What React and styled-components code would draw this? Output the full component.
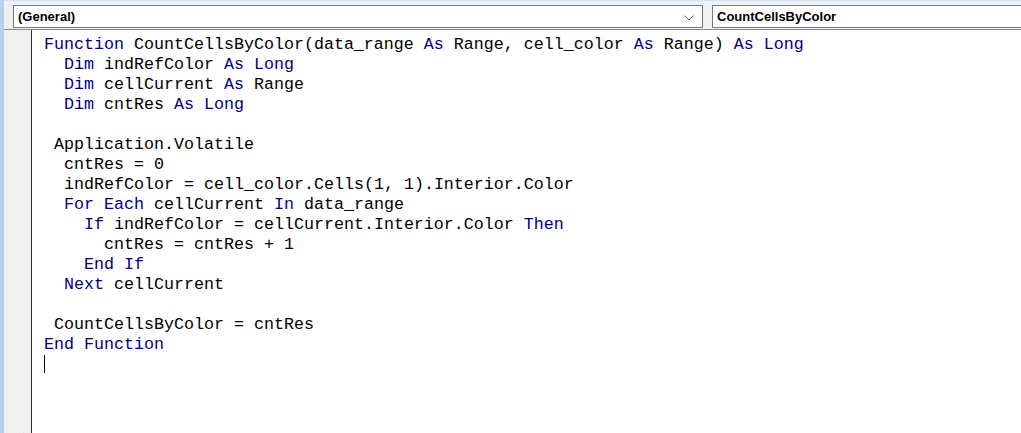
import React from "react";
import styled, { createGlobalStyle } from "styled-components";

const Global = createGlobalStyle`
  html, body { margin: 0; padding: 0; background: #ffffff; overflow: hidden; }
  #root { width: 1021px; height: 433px; }
`;

const Window = styled.div`
  display: flex;
  width: 1021px;
  height: 433px;
  overflow: hidden;
`;

const SideStrip = styled.div`
  width: 4px;
  flex: none;
  background: #b9d1ea;
`;

const Main = styled.div`
  flex: 1;
  display: flex;
  flex-direction: column;
  min-width: 0;
`;

const Toolbar = styled.div`
  height: 30px;
  box-sizing: border-box;
  display: flex;
  align-items: flex-start;
  gap: 9px;
  padding: 4px 0 0 9px;
  background: #f0f0f0;
  border-top: 1px solid #d3e1f0;
  border-bottom: 1px solid #8a8a8a;
`;

const ProcBox = styled.div`
  box-sizing: border-box;
  height: 23px;
  width: ${(p) => p.$w};
  flex: none;
  display: flex;
  align-items: center;
  justify-content: space-between;
  padding: 0 0 0 4px;
  background: #ffffff;
  border: 1px solid #7a7a7a;
  ${(p) => (p.$open ? "border-right: none;" : "")}
  font-family: "Liberation Sans", Arial, sans-serif;
  font-weight: 700;
  font-size: 13px;
  color: #000000;
`;

const Chevron = styled.svg`
  width: 10px;
  height: 6px;
  margin-right: 8px;
  margin-top: 2px;
`;

const Editor = styled.div`
  flex: 1;
  display: flex;
  min-height: 0;
`;

const Gutter = styled.div`
  width: 27px;
  flex: none;
  background-color: #f0f0f0;
  background-image: radial-gradient(circle, #dcdcf4 0.5px, transparent 0.9px),
    radial-gradient(circle, #e2e2f4 0.5px, transparent 0.9px);
  background-size: 23px 29px, 19px 37px;
  background-position: 8px 11px, 16px 3px;
  border-right: 1px solid #303030;
`;

const Code = styled.div`
  flex: 1;
  box-sizing: border-box;
  padding: 5px 0 0 12px;
  background: #ffffff;
  font-family: "Liberation Mono", "Courier New", monospace;
  font-size: 16.66px;
  line-height: 20px;
  color: #000000;
`;

const Line = styled.div`
  height: 20px;
  white-space: pre;
`;

const Kw = styled.span`
  color: #00007f;
`;

const Caret = styled.span`
  display: inline-block;
  width: 1px;
  height: 18px;
  margin-top: 0px;
  background: #000000;
  vertical-align: top;
`;

const KEYWORDS = new Set([
  "Function", "As", "Long", "Dim", "For", "Each", "In", "If", "Then", "End", "Next",
]);

const lines = [
  "Function CountCellsByColor(data_range As Range, cell_color As Range) As Long",
  "  Dim indRefColor As Long",
  "  Dim cellCurrent As Range",
  "  Dim cntRes As Long",
  "",
  " Application.Volatile",
  "  cntRes = 0",
  "  indRefColor = cell_color.Cells(1, 1).Interior.Color",
  "  For Each cellCurrent In data_range",
  "    If indRefColor = cellCurrent.Interior.Color Then",
  "      cntRes = cntRes + 1",
  "    End If",
  "  Next cellCurrent",
  "",
  " CountCellsByColor = cntRes",
  "End Function",
];

function renderLine(text) {
  const parts = text.split(/(\b[A-Za-z_]+\b)/);
  return parts.map((p, i) =>
    KEYWORDS.has(p) ? <Kw key={i}>{p}</Kw> : <React.Fragment key={i}>{p}</React.Fragment>
  );
}

export default function App() {
  return (
    <>
      <Global />
      <Window>
        <SideStrip />
        <Main>
          <Toolbar>
            <ProcBox $w="690px">
              <span>(General)</span>
              <Chevron viewBox="0 0 10 6">
                <path d="M0.5 0.5 L5 5 L9.5 0.5" fill="none" stroke="#606060" strokeWidth="1" />
              </Chevron>
            </ProcBox>
            <ProcBox $w="320px" $open>
              <span>CountCellsByColor</span>
            </ProcBox>
          </Toolbar>
          <Editor>
            <Gutter />
            <Code>
              {lines.map((l, i) => (
                <Line key={i}>{renderLine(l)}</Line>
              ))}
              <Line>
                <Caret />
              </Line>
            </Code>
          </Editor>
        </Main>
      </Window>
    </>
  );
}
